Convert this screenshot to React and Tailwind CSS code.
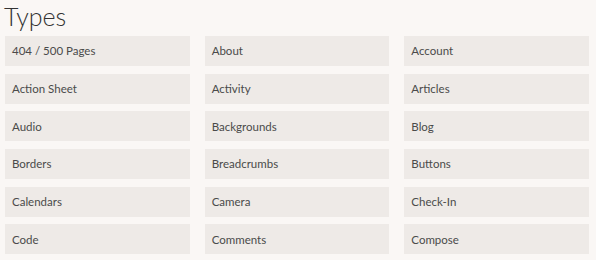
import React from "react";

const types = [
  "404 / 500 Pages",
  "About",
  "Account",
  "Action Sheet",
  "Activity",
  "Articles",
  "Audio",
  "Backgrounds",
  "Blog",
  "Borders",
  "Breadcrumbs",
  "Buttons",
  "Calendars",
  "Camera",
  "Check-In",
  "Code",
  "Comments",
  "Compose",
];

export default function App() {
  return (
    <div
      className="w-[596px] h-[260px] overflow-hidden bg-[#faf7f5] pl-[5px] pr-[7px]"
      style={{ fontFamily: "Lato, 'Open Sans', sans-serif" }}
    >
      <h1 className="text-[25px] leading-[30px] font-light text-[#333] pt-[1px] -ml-[1px]">
        Types
      </h1>
      <div className="grid grid-cols-3 gap-x-[15px] gap-y-[7.7px] mt-[5px]">
        {types.map((t) => (
          <div
            key={t}
            className="h-[30px] bg-[#eeeae7] flex items-center px-[7px] text-[11.5px] text-[#4a4a4a]"
          >
            {t}
          </div>
        ))}
      </div>
    </div>
  );
}
